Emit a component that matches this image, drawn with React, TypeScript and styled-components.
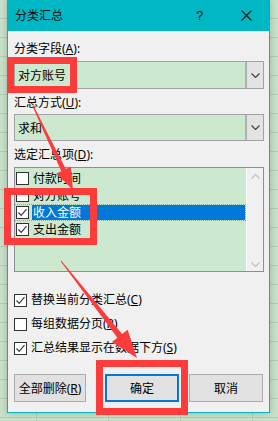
import styled, { createGlobalStyle } from "styled-components";

const GlobalStyle = createGlobalStyle`
  html, body {
    margin: 0;
    padding: 0;
  }
  body {
    width: 278px;
    height: 421px;
    overflow: hidden;
    background-color: #c8dfc9;
    background-image:
      repeating-linear-gradient(to bottom, transparent 0 18px, #b3cbb4 18px 19px),
      repeating-linear-gradient(to right, transparent 0 36px, #b3cbb4 36px 37px, transparent 37px 72px);
    font-family: "Noto Sans", "Noto Sans CJK SC", sans-serif;
    font-size: 12px;
    color: #000;
  }
`;

const Page = styled.div`
  position: relative;
  width: 278px;
  height: 421px;
`;

const Dialog = styled.div`
  margin-left: 7px;
  width: 263px;
  height: 413px;
  box-sizing: border-box;
  border: 1px solid #00b4c1;
  border-top: none;
  background: #f0f0f0;
  display: flex;
  flex-direction: column;
  box-shadow: 0 0 6px rgba(0, 60, 40, 0.25);
`;

const TitleBar = styled.div`
  height: 31px;
  flex: none;
  display: flex;
  align-items: center;
  padding-left: 7px;
  background: #00b7c3;
`;

const Title = styled.span`
  flex: 1;
  font-size: 12px;
  line-height: 16px;
  color: #111;
`;

const Help = styled.span`
  width: 12px;
  margin-right: 33px;
  font-family: "Liberation Sans", sans-serif;
  font-size: 13px;
  color: #111;
`;

const Close = styled.span`
  width: 11px;
  height: 11px;
  margin-right: 17px;
  display: flex;
`;

const Content = styled.div`
  flex: 1;
  display: flex;
  flex-direction: column;
  padding: 10px 5px 0 6px;
`;

const Label = styled.div<{ $gap?: number }>`
  height: 16px;
  line-height: 16px;
  margin-top: ${(p) => p.$gap ?? 0}px;
`;

const Key = styled.span`
  text-decoration: underline;
  text-underline-offset: 1px;
`;

const Combo = styled.div<{ $h: number; $gap: number }>`
  height: ${(p) => p.$h}px;
  margin-top: ${(p) => p.$gap}px;
  box-sizing: border-box;
  border: 1px solid #a3a3a3;
  background: #cce8cf;
  display: flex;
  align-items: stretch;
`;

const ComboText = styled.span`
  flex: 1;
  padding-left: 3px;
  display: flex;
  align-items: center;
  font-size: 12px;
`;

const DropButton = styled.span`
  width: 16px;
  border-left: 2px solid #b0b0b0;
  background: #e3e3e3;
  display: flex;
  align-items: center;
  justify-content: center;
`;

const List = styled.div`
  height: 105px;
  margin-top: 4px;
  box-sizing: border-box;
  border: 1px solid #8c8f96;
  background: #cce8cf;
  display: flex;
`;

const Items = styled.div`
  flex: 1;
  padding-top: 2px;
`;

const Item = styled.div<{ $focus?: boolean }>`
  height: 17px;
  display: flex;
  align-items: center;
  padding-left: 1px;
  box-sizing: border-box;
  border: 1px dotted ${(p) => (p.$focus ? "#d99a2a" : "transparent")};
  border-left: none;
`;

const ItemText = styled.span<{ $selected?: boolean }>`
  flex: ${(p) => (p.$selected ? 1 : "none")};
  height: 15px;
  line-height: 15px;
  margin-left: 3px;
  padding-left: 1px;
  background: ${(p) => (p.$selected ? "#0078d7" : "transparent")};
  color: ${(p) => (p.$selected ? "#fff" : "#000")};
`;

const Scroll = styled.div`
  width: 17px;
  border-left: 1px solid #fff;
  background: #f0f0f0;
  display: flex;
  flex-direction: column;
  justify-content: space-between;
  align-items: center;
  padding: 6px 0 4px;
  box-sizing: border-box;
`;

const Box = styled.span`
  width: 13px;
  height: 13px;
  flex: none;
  box-sizing: border-box;
  border: 1px solid #333;
  background: #fff;
  display: flex;
  align-items: center;
  justify-content: center;
`;

const Options = styled.div`
  margin-top: 16px;
  display: flex;
  flex-direction: column;
`;

const Option = styled.div`
  height: 24px;
  display: flex;
  align-items: center;
  gap: 4px;
`;

const OptionText = styled.span`
  line-height: 16px;
`;

const Buttons = styled.div`
  margin-top: 14px;
  display: flex;
  gap: 10px;
`;

const Button = styled.div<{ $w: number; $default?: boolean; $after?: number }>`
  width: ${(p) => p.$w}px;
  height: 28px;
  margin-right: ${(p) => p.$after ?? 0}px;
  box-sizing: border-box;
  border: ${(p) => (p.$default ? "2px solid #0078d7" : "1px solid #adadad")};
  background: #e1e1e1;
  display: flex;
  align-items: center;
  justify-content: center;
`;

const Mark = styled.div<{ $x: number; $y: number; $w: number; $h: number }>`
  position: absolute;
  left: ${(p) => p.$x}px;
  top: ${(p) => p.$y}px;
  width: ${(p) => p.$w}px;
  height: ${(p) => p.$h}px;
  box-sizing: border-box;
  border: 7px solid #fc3b3b;
  pointer-events: none;
`;

const Overlay = styled.svg`
  position: absolute;
  left: 0;
  top: 0;
  pointer-events: none;
`;

const Check = () => (
  <svg width="11" height="11" viewBox="0 0 11 11">
    <polyline points="1.5,5.5 4.2,8.3 9.5,2.2" fill="none" stroke="#3a3a3a" strokeWidth="1.2" />
  </svg>
);

const Chevron = ({ up, color }: { up?: boolean; color: string }) => (
  <svg width="9" height="5" viewBox="0 0 9 5">
    <polyline
      points={up ? "0.5,4.5 4.5,0.5 8.5,4.5" : "0.5,0.5 4.5,4.5 8.5,0.5"}
      fill="none"
      stroke={color}
      strokeWidth="1.2"
    />
  </svg>
);

// tapered arrow as one polygon
const arrow = (x1: number, y1: number, x2: number, y2: number, head: number, wing: number, tail: number, neck: number) => {
  const dx = x2 - x1;
  const dy = y2 - y1;
  const len = Math.hypot(dx, dy);
  const ux = dx / len;
  const uy = dy / len;
  const nx = -uy;
  const ny = ux;
  const bx = x2 - ux * head;
  const by = y2 - uy * head;
  const pts = [
    [x1 + (nx * tail) / 2, y1 + (ny * tail) / 2],
    [bx + (nx * neck) / 2, by + (ny * neck) / 2],
    [bx + nx * wing, by + ny * wing],
    [x2, y2],
    [bx - nx * wing, by - ny * wing],
    [bx - (nx * neck) / 2, by - (ny * neck) / 2],
    [x1 - (nx * tail) / 2, y1 - (ny * tail) / 2],
  ];
  return pts.map((p) => p.map((v) => v.toFixed(1)).join(",")).join(" ");
};

const items = [
  { text: "付款时间", checked: false },
  { text: "对方账号", checked: false },
  { text: "收入金额", checked: true, selected: true },
  { text: "支出金额", checked: true },
];

const App = () => {
  return (
    <Page>
      <GlobalStyle />
      <Dialog>
        <TitleBar>
          <Title>分类汇总</Title>
          <Help>?</Help>
          <Close>
            <svg width="11" height="11" viewBox="0 0 11 11">
              <path d="M0.5 0.5 L10.5 10.5 M10.5 0.5 L0.5 10.5" stroke="#111" strokeWidth="1.1" />
            </svg>
          </Close>
        </TitleBar>
        <Content>
          <Label>
            分类字段(<Key>A</Key>):
          </Label>
          <Combo $h={28} $gap={4}>
            <ComboText>对方账号</ComboText>
            <DropButton>
              <Chevron color="#444" />
            </DropButton>
          </Combo>
          <Label $gap={6}>
            汇总方式(<Key>U</Key>):
          </Label>
          <Combo $h={27} $gap={3}>
            <ComboText>求和</ComboText>
            <DropButton>
              <Chevron color="#444" />
            </DropButton>
          </Combo>
          <Label $gap={6}>
            选定汇总项(<Key>D</Key>):
          </Label>
          <List>
            <Items>
              {items.map((it) => (
                <Item key={it.text} $focus={it.selected}>
                  <Box>{it.checked && <Check />}</Box>
                  <ItemText $selected={it.selected}>{it.text}</ItemText>
                </Item>
              ))}
            </Items>
            <Scroll>
              <Chevron up color="#c2c2c2" />
              <Chevron color="#c2c2c2" />
            </Scroll>
          </List>
          <Options>
            <Option>
              <Box>
                <Check />
              </Box>
              <OptionText>
                替换当前分类汇总(<Key>C</Key>)
              </OptionText>
            </Option>
            <Option>
              <Box />
              <OptionText>
                每组数据分页(<Key>P</Key>)
              </OptionText>
            </Option>
            <Option>
              <Box>
                <Check />
              </Box>
              <OptionText>
                汇总结果显示在数据下方(<Key>S</Key>)
              </OptionText>
            </Option>
          </Options>
          <Buttons>
            <Button $w={72} $after={9}>
              <span>
                全部删除(<Key>R</Key>)
              </span>
            </Button>
            <Button $w={74} $default>
              确定
            </Button>
            <Button $w={74}>取消</Button>
          </Buttons>
        </Content>
      </Dialog>

      <Mark $x={7} $y={57} $w={70} $h={36} />
      <Mark $x={4} $y={188} $w={93} $h={57} />
      <Mark $x={96} $y={360} $w={92} $h={55} />
      <Overlay width="278" height="421" viewBox="0 0 278 421">
        <polygon points={arrow(33, 106, 73, 190, 22, 8, 1, 5)} fill="#fc3b3b" />
        <polygon points={arrow(61, 261, 137, 358, 28, 10, 1, 6)} fill="#fc3b3b" />
      </Overlay>
    </Page>
  );
};

export default App;
